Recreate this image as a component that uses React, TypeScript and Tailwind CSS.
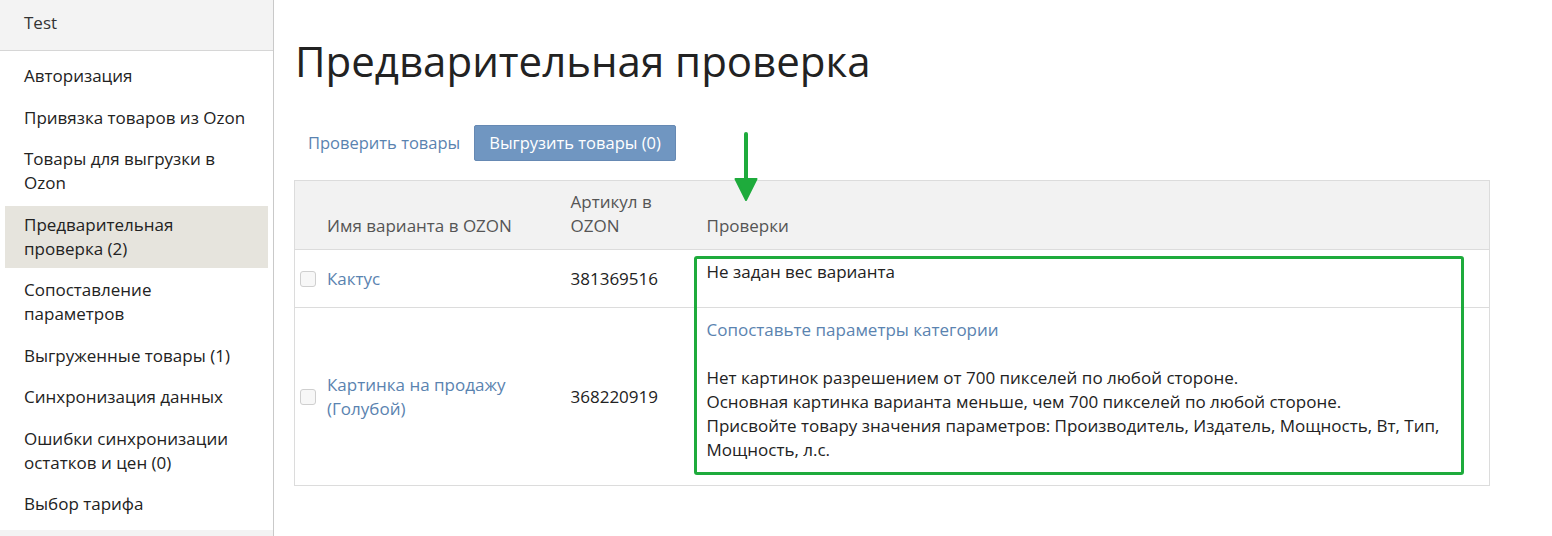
import React from "react";

const menu = [
  { label: "Авторизация" },
  { label: "Привязка товаров из Ozon" },
  { label: "Товары для выгрузки в Ozon" },
  { label: "Предварительная проверка (2)", active: true },
  { label: "Сопоставление параметров" },
  { label: "Выгруженные товары (1)" },
  { label: "Синхронизация данных" },
  { label: "Ошибки синхронизации остатков и цен (0)" },
  { label: "Выбор тарифа" },
];

function Checkbox() {
  return <span className="inline-block w-4 h-4 shrink-0 rounded-[3px] border border-[#cfcfcf] bg-[#f7f7f7]" />;
}

export default function App() {
  return (
    <div className="flex min-h-[536px] bg-white text-[17px] leading-6 text-[#222]" style={{ fontFamily: '"Open Sans", "Noto Sans", sans-serif' }}>
      {/* sidebar */}
      <aside className="w-[274px] shrink-0 border-r border-[#c9c9c9] flex flex-col">
        <div className="h-[51px] bg-[#f3f3f3] border-b border-[#d6d6d6] pl-6 pt-[11px] text-[#333]">Test</div>
        <nav className="flex flex-col gap-[3.5px] px-[5px] pt-[6px]">
          {menu.map((m) => (
            <div key={m.label} className={`px-[19px] py-[7px] ${m.active ? "bg-[#e6e4dd]" : ""}`}>
              {m.label}
            </div>
          ))}
        </nav>
        <div className="mt-auto h-[6px] bg-[#f3f3f3]" />
      </aside>

      {/* main */}
      <main className="flex-1 pl-[20px] pt-[35px]">
        <h1 className="text-[42px] leading-[52px] text-[#222] pl-[1px]">Предварительная проверка</h1>

        <div className="flex items-center gap-[14px] mt-[38px] pl-[14px] text-[16.5px]">
          <a className="text-[#5a83b0] cursor-pointer">Проверить товары</a>
          <button className="h-9 px-[14px] bg-[#7096c1] text-white rounded-[2px] border border-[#6689b3]">Выгрузить товары (0)</button>
        </div>

        <div className="relative mt-[19px] w-[1196px]">
          <table className="w-full border-collapse border border-[#dcdcdc]">
            <thead>
              <tr className="bg-[#f2f2f2] text-[#555] text-left align-bottom">
                <th className="w-[264px] h-[69px] font-normal pl-[32px] pb-[11px]">Имя варианта в OZON</th>
                <th className="w-[136px] font-normal px-3 pb-[11px]">Артикул в OZON</th>
                <th className="font-normal px-3 pb-[11px]">Проверки</th>
              </tr>
            </thead>
            <tbody>
              <tr className="border-t border-[#dcdcdc]">
                <td className="pl-[5px] pr-5 align-middle">
                  <div className="flex items-center gap-[11px]">
                    <Checkbox />
                    <a className="text-[#5a83b0]">Кактус</a>
                  </div>
                </td>
                <td className="px-3 align-middle">381369516</td>
                <td className="px-3 pt-[10px] pb-[23px] align-top">Не задан вес варианта</td>
              </tr>
              <tr className="border-t border-[#dcdcdc]">
                <td className="pl-[5px] pr-5 align-middle">
                  <div className="flex items-center gap-[11px]">
                    <Checkbox />
                    <a className="text-[#5a83b0]">Картинка на продажу (Голубой)</a>
                  </div>
                </td>
                <td className="px-3 align-middle">368220919</td>
                <td className="px-3 pt-[10px] pb-[23px] align-top">
                  <a className="text-[#5a83b0]">Сопоставьте параметры категории</a>
                  <div className="mt-6">
                    Нет картинок разрешением от 700 пикселей по любой стороне.
                    <br />
                    Основная картинка варианта меньше, чем 700 пикселей по любой стороне.
                    <br />
                    Присвойте товару значения параметров: Производитель, Издатель, Мощность, Вт, Тип, Мощность, л.с.
                  </div>
                </td>
              </tr>
            </tbody>
          </table>

          {/* highlight */}
          <div className="absolute left-[400px] top-[76px] w-[770px] h-[219px] border-[3px] border-[#1eab3c] rounded-[3px] pointer-events-none" />
          <svg className="absolute left-[440px] top-[-48px]" width="24" height="70" viewBox="0 0 24 70">
            <path d="M12 2 V52" stroke="#1eab3c" strokeWidth="4" strokeLinecap="round" />
            <path d="M1.5 47 L12 68 L22.5 47 Z" fill="#1eab3c" stroke="#1eab3c" strokeWidth="2" strokeLinejoin="round" />
          </svg>
        </div>
      </main>
    </div>
  );
}
